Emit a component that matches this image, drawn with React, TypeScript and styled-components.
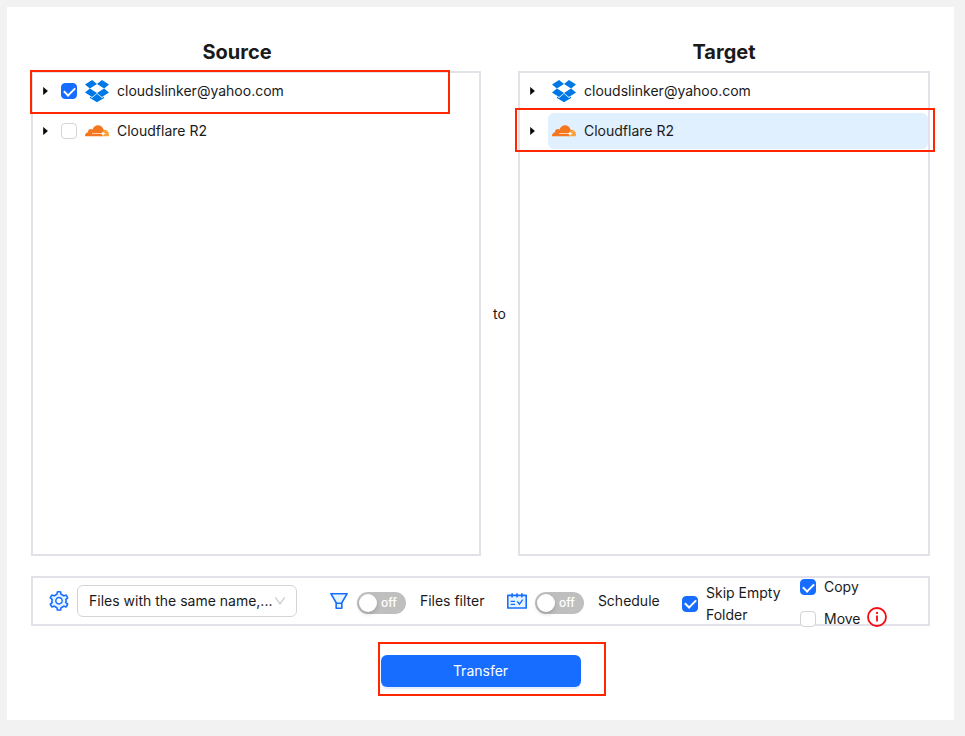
import React, { useState } from "react";
import styled, { createGlobalStyle, css } from "styled-components";
import { AiOutlineDown, AiTwotoneSchedule, AiTwotoneSetting } from "react-icons/ai";

const GlobalStyle = createGlobalStyle`
  * { box-sizing: border-box; }
  body {
    margin: 0;
    background: #f2f2f2;
    color: #1a1a1a;
    font: 14px/22px Inter, "Liberation Sans", sans-serif;
  }
  button, select, input { font: inherit; color: inherit; margin: 0; }
`;

const Card = styled.main`
  margin: 7px 11px 16px 7px;
  padding: 30px 24px 33px;
  background: #fff;
`;

const Columns = styled.div`
  display: grid;
  grid-template-columns: 450fr 37px 412fr;
`;

const Column = styled.section`
  display: flex;
  flex-direction: column;
  min-width: 0;
`;

const Title = styled.h2<{ $inset?: boolean }>`
  margin: 0;
  padding-right: ${(p) => (p.$inset ? "38px" : "0")};
  height: 34px;
  font-size: 20px;
  line-height: 30px;
  font-weight: 700;
  text-align: center;
`;

const Panel = styled.ul`
  display: flex;
  flex-direction: column;
  gap: 4px;
  margin: 0;
  padding: 0;
  min-height: 485px;
  list-style: none;
  border: 2px solid #e2e2e8;
`;

const Between = styled.div`
  padding-top: 34px;
  display: flex;
  align-items: center;
  justify-content: center;
`;

const Row = styled.li`
  position: relative;
  display: flex;
  align-items: center;
  gap: 4px;
  height: 36px;
`;

const Expander = styled.button`
  width: 24px;
  height: 36px;
  padding: 0;
  border: 0;
  background: none;
  display: flex;
  align-items: center;
  justify-content: center;
  cursor: pointer;
`;

const Node = styled.div<{ $selected?: boolean }>`
  flex: 1;
  height: 36px;
  padding: 0 4px;
  border-radius: 6px;
  display: flex;
  align-items: center;
  background: ${(p) => (p.$selected ? "#e1f0fe" : "transparent")};
`;

const NodeLabel = styled.label`
  display: flex;
  align-items: center;
  gap: 8px;
`;

const frame = css`
  position: absolute;
  border: 2px solid #ff2600;
  pointer-events: none;
`;

const SourceFrame = styled.span`
  ${frame}
  inset: -3px 29px -5px -3px;
`;

const TargetFrame = styled.span`
  ${frame}
  inset: -5px -7px -3px -5px;
`;

const ButtonFrame = styled.span`
  ${frame}
  inset: -13px -25px -9px -3px;
`;

const Tick = styled.input.attrs({ type: "checkbox" })`
  appearance: none;
  flex: none;
  width: 16px;
  height: 16px;
  border: 1px solid #d4d4d4;
  border-radius: 4px;
  background: #fff;
  display: flex;
  align-items: center;
  justify-content: center;
  &:checked {
    border-color: #166dff;
    background: #166dff;
  }
  &:checked::after {
    content: "";
    width: 5px;
    height: 9px;
    margin-bottom: 2px;
    border: solid #fff;
    border-width: 0 2px 2px 0;
    transform: rotate(45deg);
  }
`;

const Toolbar = styled.section`
  margin-top: 20px;
  height: 50px;
  padding-left: 16px;
  border: 2px solid #e2e2e8;
  display: grid;
  grid-template-columns: 280fr 178fr 175fr 118fr 128fr;
  grid-template-rows: 46px;
  align-items: center;
`;

const Group = styled.div`
  display: flex;
  align-items: center;
  gap: 8px;
  white-space: nowrap;

  > svg {
    flex: none;
    color: #166dff;
  }
  > svg path[fill="#D9D9D9"],
  > svg path[fill="#E6E6E6"] {
    fill: #e6f4ff;
  }
`;

const SelectBox = styled.div`
  position: relative;
  flex: 0 1 220px;
  margin-right: 32px;
  svg {
    position: absolute;
    right: 11px;
    top: 10px;
    color: #bfbfbf;
    pointer-events: none;
  }
`;

const Select = styled.select`
  appearance: none;
  width: 100%;
  height: 32px;
  padding: 0 24px 0 11px;
  border: 1px solid #d4d4d4;
  border-radius: 6px;
  background: #fff;
`;

const Switch = styled.button`
  flex: none;
  height: 22px;
  margin-top: 4px;
  padding: 0 9px 0 2px;
  border: 0;
  border-radius: 11px;
  background: #bfbfbf;
  color: #fff;
  font-size: 12px;
  font-weight: 500;
  display: flex;
  align-items: center;
  gap: 4px;
  &::before {
    content: "";
    width: 18px;
    height: 18px;
    border-radius: 9px;
    background: #fff;
    box-shadow: 0 2px 4px rgba(0, 35, 11, 0.2);
  }
  &[aria-checked="true"] {
    background: #166dff;
  }
`;

const SwitchLabel = styled.label`
  padding-left: 6px;
`;

const CheckLabel = styled.label`
  display: flex;
  align-items: center;
  gap: 8px;
`;

const WrapLabel = styled(CheckLabel)`
  padding: 5px 16px 0 0;
`;

const Modes = styled.div`
  display: flex;
  flex-direction: column;
  gap: 10px;
  padding-top: 4px;
`;

const ModeRow = styled.div`
  height: 22px;
  display: flex;
  align-items: center;
  gap: 6px;
  svg {
    margin-bottom: 4px;
  }
`;

const Actions = styled.div`
  margin-top: 29px;
  display: flex;
  justify-content: center;
`;

const ButtonHolder = styled.div`
  position: relative;
`;

const TransferButton = styled.button`
  display: block;
  width: 200px;
  height: 32px;
  border: 0;
  border-radius: 6px;
  background: #166dff;
  color: #fff;
  box-shadow: 0 2px 0 rgba(5, 95, 255, 0.1);
`;

const BOX = "64 64 896 896";

const Caret = () => (
  <svg width="5" height="8" viewBox="0 0 5 8" aria-hidden="true">
    <path d="M0.5 0.5 4.5 4 0.5 7.5z" fill="#000" stroke="#000" strokeWidth="0.6" />
  </svg>
);

const InfoIcon = () => (
  <svg width="20" height="20" viewBox="0 0 20 20" fill="none" stroke="#f50a12" aria-hidden="true">
    <circle cx="10" cy="10" r="9" strokeWidth="1.8" />
    <path d="M10 8.5v6M10 5v2" strokeWidth="1.8" />
  </svg>
);

const FilterIcon = () => (
  <svg width="20" height="20" viewBox={BOX} aria-hidden="true">
    <path
      fill="#e6f4ff"
      d="M420.6 798h182.9V642H420.6zM411 561.4l9.5 16.6h183l9.5-16.6L811.3 226H212.7z"
    />
    <path
      fill="currentColor"
      d="M880.1 154H143.9c-24.5 0-39.8 26.7-27.5 48L349 597.4V838c0 17.7 14.2 32 31.8 32h262.4c17.6 0 31.8-14.3 31.8-32V597.4L907.7 202c12.2-21.3-3.1-48-27.6-48zM603.5 798H420.6V642h182.9v156zm9.5-236.6l-9.5 16.6h-183l-9.5-16.6L212.7 226h598.6L613 561.4z"
    />
  </svg>
);

const DropboxIcon = () => (
  <svg width="24" height="24" viewBox="0 0 24 24" fill="#0077e6" aria-hidden="true">
    <path d="M7.06 1 0 5.61l4.882 3.908L12 5.123zM16.94 1 12 5.123l7.118 4.395L24 5.61zM4.882 9.518 0 13.426l7.06 4.61L12 13.914zM19.118 9.518 12 13.914l4.94 4.122L24 13.426zM12.014 14.8l-4.955 4.112-2.12-1.384v1.552l7.075 4.22 7.075-4.22v-1.552l-2.12 1.384z" />
  </svg>
);

const CloudflareIcon = () => (
  <svg width="24" height="24" viewBox="0 0 24 24" aria-hidden="true">
    <path
      fill="#faa23c"
      d="M16 17.3V14l2.4-3.2c.3 0 .6-.1.9-.1 2.6 0 4.7 2.1 4.7 4.8 0 .6-.1 1.2-.2 1.8z"
    />
    <path
      fill="#f4771f"
      d="M0 17.3c-.1-2.3 1.3-3.9 3.2-4.1-.5-1.8.8-3.3 2.5-3.3.7 0 1.3.2 1.8.5C8.400 8 10.300 6.200 13 6.200c2.700 0 5 1.900 5.500 4.400.3 1.500-.2 2.400-.6 3.400l-1 3.300z"
    />
    <path d="M7 14.500h9.500" stroke="#fff" strokeWidth="0.8" opacity="0.8" />
    <path
      fill="#fff"
      d="m18 12.200.7 1.600 1.800.8-1.800.8-.7 1.600-.7-1.600-1.800-.8 1.800-.8z"
    />
  </svg>
);

type SwitchFieldProps = { id: string; label: string; icon: React.ReactNode };

function SwitchField({ id, label, icon }: SwitchFieldProps) {
  const [on, setOn] = useState(false);
  return (
    <Group>
      {icon}
      <Switch id={id} type="button" role="switch" aria-checked={on} onClick={() => setOn(!on)}>
        {on ? "on" : "off"}
      </Switch>
      <SwitchLabel htmlFor={id}>{label}</SwitchLabel>
    </Group>
  );
}

export default function App() {
  return (
    <>
      <GlobalStyle />
      <Card>
        <Columns>
          <Column>
            <Title $inset>Source</Title>
            <Panel>
              <Row>
                <Expander type="button" aria-label="Expand cloudslinker@yahoo.com">
                  <Caret />
                </Expander>
                <NodeLabel>
                  <Tick defaultChecked />
                  <DropboxIcon />
                  cloudslinker@yahoo.com
                </NodeLabel>
                <SourceFrame />
              </Row>
              <Row>
                <Expander type="button" aria-label="Expand Cloudflare R2">
                  <Caret />
                </Expander>
                <NodeLabel>
                  <Tick />
                  <CloudflareIcon />
                  Cloudflare R2
                </NodeLabel>
              </Row>
            </Panel>
          </Column>
          <Between>to</Between>
          <Column>
            <Title>Target</Title>
            <Panel>
              <Row>
                <Expander type="button" aria-label="Expand cloudslinker@yahoo.com">
                  <Caret />
                </Expander>
                <Node>
                  <NodeLabel as="span">
                    <DropboxIcon />
                    cloudslinker@yahoo.com
                  </NodeLabel>
                </Node>
              </Row>
              <Row>
                <Expander type="button" aria-label="Expand Cloudflare R2">
                  <Caret />
                </Expander>
                <Node $selected>
                  <NodeLabel as="span">
                    <CloudflareIcon />
                    Cloudflare R2
                  </NodeLabel>
                </Node>
                <TargetFrame />
              </Row>
            </Panel>
          </Column>
        </Columns>
        <Toolbar>
          <Group>
            <AiTwotoneSetting size={20} viewBox={BOX} />
            <SelectBox>
              <Select aria-label="Files with the same name">
                <option>Files with the same name,...</option>
              </Select>
              <AiOutlineDown size={12} viewBox={BOX} />
            </SelectBox>
          </Group>
          <SwitchField id="files-filter" label="Files filter" icon={<FilterIcon />} />
          <SwitchField
            id="schedule"
            label="Schedule"
            icon={<AiTwotoneSchedule size={20} viewBox={BOX} />}
          />
          <WrapLabel>
            <Tick defaultChecked />
            Skip Empty Folder
          </WrapLabel>
          <Modes>
            <ModeRow>
              <CheckLabel>
                <Tick defaultChecked />
                Copy
              </CheckLabel>
            </ModeRow>
            <ModeRow>
              <CheckLabel>
                <Tick />
                Move
              </CheckLabel>
              <InfoIcon />
            </ModeRow>
          </Modes>
        </Toolbar>
        <Actions>
          <ButtonHolder>
            <TransferButton type="button">Transfer</TransferButton>
            <ButtonFrame />
          </ButtonHolder>
        </Actions>
      </Card>
    </>
  );
}
